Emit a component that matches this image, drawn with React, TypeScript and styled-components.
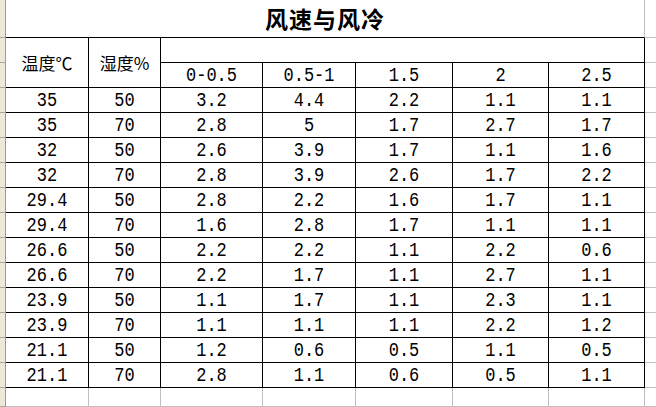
import React from "react";
import styled, { createGlobalStyle } from "styled-components";

const rows: string[][] = [
  ["35", "50", "3.2", "4.4", "2.2", "1.1", "1.1"],
  ["35", "70", "2.8", "5", "1.7", "2.7", "1.7"],
  ["32", "50", "2.6", "3.9", "1.7", "1.1", "1.6"],
  ["32", "70", "2.8", "3.9", "2.6", "1.7", "2.2"],
  ["29.4", "50", "2.8", "2.2", "1.6", "1.7", "1.1"],
  ["29.4", "70", "1.6", "2.8", "1.7", "1.1", "1.1"],
  ["26.6", "50", "2.2", "2.2", "1.1", "2.2", "0.6"],
  ["26.6", "70", "2.2", "1.7", "1.1", "2.7", "1.1"],
  ["23.9", "50", "1.1", "1.7", "1.1", "2.3", "1.1"],
  ["23.9", "70", "1.1", "1.1", "1.1", "2.2", "1.2"],
  ["21.1", "50", "1.2", "0.6", "0.5", "1.1", "0.5"],
  ["21.1", "70", "2.8", "1.1", "0.6", "0.5", "1.1"],
];

const speeds = ["0-0.5", "0.5-1", "1.5", "2", "2.5"];

const GlobalStyle = createGlobalStyle`
  html, body {
    margin: 0;
    padding: 0;
    background: #fff;
  }
  body {
    width: 656px;
    height: 407px;
    overflow: hidden;
  }
`;

const Sheet = styled.div`
  display: grid;
  grid-template-columns: 6px 83px 72px 102px 93px 97px 96px 96px 1fr;
  grid-template-rows: 38px 25px 25px repeat(12, 25px) 19px;
  width: 656px;
  height: 407px;
  background: #fff;
  color: #000;
`;

const RowHead = styled.div`
  background: #ece9d8;
  border-right: 1px solid #9d9a85;
  border-bottom: 1px solid #aca899;
  box-sizing: border-box;
`;

const Cell = styled.div<{ $grid?: boolean; $cols?: number; $rows?: number }>`
  grid-column: span ${(p) => p.$cols || 1};
  grid-row: span ${(p) => p.$rows || 1};
  display: flex;
  align-items: center;
  justify-content: center;
  box-sizing: border-box;
  border-right: 1px solid ${(p) => (p.$grid ? "#c0c0c0" : "#000")};
  border-bottom: 1px solid ${(p) => (p.$grid ? "#c0c0c0" : "#000")};
  white-space: nowrap;
  overflow: hidden;
`;

const Num = styled.span`
  display: inline-block;
  font-family: "Liberation Mono", monospace;
  font-size: 17px;
  line-height: 1;
  transform: scaleY(1.18);
  padding-top: 1px;
`;

const Spare = styled.div`
  border-bottom: 1px solid #c0c0c0;
  box-sizing: border-box;
`;

const Title = styled.div`
  grid-column: span 7;
  display: flex;
  align-items: center;
  justify-content: center;
  box-sizing: border-box;
  padding-bottom: 1px;
  border-right: 1px solid #c0c0c0;
  border-bottom: 1px solid #000;
  font-family: "Noto Sans CJK SC", sans-serif;
  font-weight: 700;
  font-size: 23px;
  letter-spacing: 1px;
`;

const Label = styled.span`
  font-family: "Noto Sans CJK SC", sans-serif;
  font-size: 17px;
`;

export default function App() {
  return (
    <>
      <GlobalStyle />
      <Sheet>
        <RowHead />
        <Title>风速与风冷</Title>
        <Spare />

        <RowHead />
        <Cell $rows={2}>
          <Label>温度℃</Label>
        </Cell>
        <Cell $rows={2}>
          <Label>湿度%</Label>
        </Cell>
        <Cell $cols={5} />
        <Spare />

        <RowHead />
        {speeds.map((s) => (
          <Cell key={s}>
            <Num>{s}</Num>
          </Cell>
        ))}
        <Spare />

        {rows.map((r, i) => (
          <React.Fragment key={i}>
            <RowHead />
            {r.map((v, j) => (
              <Cell key={j}>
                <Num>{v}</Num>
              </Cell>
            ))}
            <Spare />
          </React.Fragment>
        ))}

        <RowHead />
        {Array.from({ length: 7 }).map((_, j) => (
          <Cell key={j} $grid />
        ))}
        <Spare />
      </Sheet>
    </>
  );
}
